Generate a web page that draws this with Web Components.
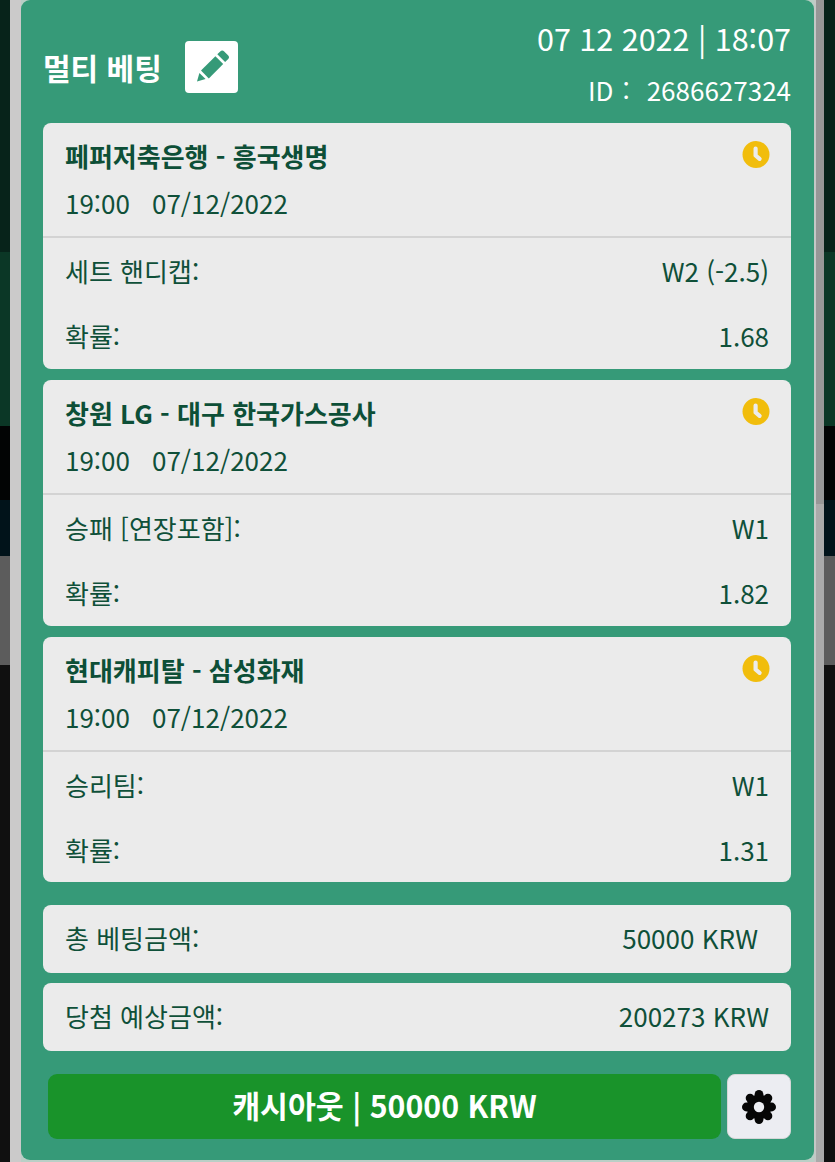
<!DOCTYPE html>
<html lang="ko">
<head>
<meta charset="utf-8">
<style>
html,body{margin:0;padding:0;background:#111;}
body{width:835px;height:1162px;overflow:hidden;font-family:"Noto Sans CJK KR","Noto Sans",sans-serif;}
</style>
</head>
<body>
<bet-screen>
  <bet-header slot="header" date="07 12 2022 | 18:07" ticket="2686627324">멀티 베팅</bet-header>
  <bet-card title-text="페퍼저축은행 - 흥국생명" market="세트 핸디캡:" pick="W2 (-2.5)" odds="1.68"></bet-card>
  <bet-card title-text="창원 LG - 대구 한국가스공사" market="승패 [연장포함]:" pick="W1" odds="1.82"></bet-card>
  <bet-card title-text="현대캐피탈 - 삼성화재" market="승리팀:" pick="W1" odds="1.31"></bet-card>
  <bet-sum slot="sum" label="총 베팅금액:" value="50000 KRW" inset></bet-sum>
  <bet-sum slot="sum" label="당첨 예상금액:" value="200273 KRW"></bet-sum>
  <bet-actions slot="actions">캐시아웃 | 50000 KRW</bet-actions>
</bet-screen>
<script>
function shadow(el, html){ el.attachShadow({mode:'open'}).innerHTML = html; }

customElements.define('bet-screen', class extends HTMLElement{
  constructor(){ super(); shadow(this, `
  <style>
    :host{display:flex;width:835px;height:1162px;}
    .strip{display:flex;flex-direction:column;flex:none;}
    .strip.l{width:10px}.strip.r{width:11px}
    .b1{height:252px;background:#07231a}
    .b2{height:174px;background:#0b3726}
    .b3{height:74px;background:#020404}
    .b4{height:56px;background:#01131a}
    .b5{height:109px;background:#5c5c5c}
    .b6{flex:1;background:#101010}
    .gl{width:11px;flex:none;background:#cbcaca}
    .gr{width:10px;flex:none;display:flex;flex-direction:column;border-left:2px solid #c4c8c6;box-sizing:border-box;}
    .gr i{display:block;height:504px;background:#979797}
    .gr b{display:block;flex:1;background:#aaaaaa}
    .mid{width:793px;flex:none;height:1162px;background:#b9cfc6;display:flex;flex-direction:column;}
    .panel{flex:none;height:1160px;box-sizing:border-box;background:#369a78;border-radius:9px;padding:0 23px 0 22px;display:flex;flex-direction:column;}
    .cards{display:flex;flex-direction:column;gap:11px;margin-top:0}
    .sums{display:flex;flex-direction:column;gap:10px;margin-top:23px}
    .acts{margin-top:23px}
  </style>
  <div class="strip l"><div class="b1"></div><div class="b2"></div><div class="b3"></div><div class="b4"></div><div class="b5"></div><div class="b6"></div></div>
  <div class="gl"></div>
  <div class="mid"><div class="panel">
    <slot name="header"></slot>
    <div class="cards"><slot></slot></div>
    <div class="sums"><slot name="sum"></slot></div>
    <div class="acts"><slot name="actions"></slot></div>
  </div></div>
  <div class="gr"><i></i><b></b></div>
  <div class="strip r"><div class="b1"></div><div class="b2"></div><div class="b3"></div><div class="b4"></div><div class="b5"></div><div class="b6"></div></div>`); }
});

customElements.define('bet-header', class extends HTMLElement{
  connectedCallback(){ if(this.shadowRoot) return; shadow(this, `
  <style>
    :host{display:flex;justify-content:space-between;height:123px;box-sizing:border-box;color:#fff;}
    .left{display:flex;align-items:center;gap:23px;height:52px;margin-top:41px}
    .t{font-size:30px;font-weight:700;line-height:52px;white-space:nowrap}
    .btn{width:53px;height:52px;background:#fff;border-radius:4px;display:flex;}
    .right{display:flex;flex-direction:column;align-items:flex-end;padding-top:16px}
    .d{font-size:30.5px;line-height:44px;white-space:nowrap}
    .id{font-size:26px;line-height:38px;margin-top:11px;display:flex;white-space:nowrap}
    .c{margin-left:9px;margin-right:17px}
  </style>
  <div class="left"><span class="t"><slot></slot></span>
    <span class="btn"><svg width="53" height="52" viewBox="0 0 53 52"><g fill="#369a78">
      <path d="M12 40.5l2.4-8.6 6.2 6.2z"/>
      <path d="M16 29.6l14.4-14.4 7.8 7.8-14.4 14.4z"/>
      <path d="M32.3 13.3l2.9-2.9a2.8 2.8 0 0 1 4 0l3.8 3.8a2.8 2.8 0 0 1 0 4l-2.9 2.9z"/>
    </g></svg></span></div>
  <div class="right"><span class="d">${this.getAttribute('date')}</span><span class="id"><span>ID</span><span class="c">:</span><span>${this.getAttribute('ticket')}</span></span></div>`); }
});

customElements.define('bet-clock', class extends HTMLElement{
  constructor(){ super(); shadow(this, `
  <style>:host{display:block;width:27px;height:27px;flex:none}svg{display:block;overflow:visible}</style>
  <svg width="27" height="27" viewBox="0 0 27 27"><circle cx="14" cy="13.5" r="13.5" fill="#f1bd0c"/>
  <path d="M13.6 7.5v7l4 3.4" fill="none" stroke="#ececec" stroke-width="4.2" stroke-linecap="round" stroke-linejoin="round"/></svg>`); }
});

customElements.define('bet-card', class extends HTMLElement{
  connectedCallback(){ if(this.shadowRoot) return; const a=n=>this.getAttribute(n); shadow(this, `
  <style>
    :host{display:block;background:#ebebeb;border-radius:8px;color:#0f5039;height:246px;font-size:26px;}
    :host(:last-of-type){height:245px}
    .head{height:115px;box-sizing:border-box;padding:13px 22px 0 22px;border-bottom:2px solid #d3d3d3;}
    .top{display:flex;justify-content:space-between;align-items:flex-start;height:40px}
    .name{font-weight:700;font-size:26px;line-height:40px;white-space:nowrap;color:#0d4f37}
    bet-clock{margin-top:5px}
    .time{line-height:40px;margin-top:7px;display:flex;gap:22px;font-size:26px;white-space:nowrap}
    .row{display:flex;justify-content:space-between;padding:0 22px;line-height:40px;white-space:nowrap}
    .r1{margin-top:13px}.r2{margin-top:25px}
  </style>
  <div class="head">
    <div class="top"><span class="name">${a('title-text')}</span><bet-clock></bet-clock></div>
    <div class="time"><span>19:00</span><span>07/12/2022</span></div>
  </div>
  <div class="row r1"><span>${a('market')}</span><span>${a('pick')}</span></div>
  <div class="row r2"><span>확률:</span><span>${a('odds')}</span></div>`); }
});

customElements.define('bet-sum', class extends HTMLElement{
  connectedCallback(){ if(this.shadowRoot) return; shadow(this, `
  <style>
    :host{display:flex;justify-content:space-between;align-items:center;height:68px;box-sizing:border-box;background:#ebebeb;border-radius:8px;color:#0f5039;font-size:26px;padding:0 22px 4px;white-space:nowrap}
    :host([inset]) .v{margin-right:11px}
  </style><span>${this.getAttribute('label')}</span><span class="v">${this.getAttribute('value')}</span>`); }
});

customElements.define('bet-actions', class extends HTMLElement{
  constructor(){ super(); 
    let lobes=''; for(let i=0;i<8;i++){const t=i*Math.PI/4; lobes+=`<circle cx="${(17+12.6*Math.cos(t)).toFixed(2)}" cy="${(17+12.6*Math.sin(t)).toFixed(2)}" r="4.4"/>`;}
    shadow(this, `
  <style>
    :host{display:flex;gap:6px;height:65px;padding-left:5px;}
    .cash{width:673px;flex:none;background:#19932a;border-radius:9px;color:#fff;font-size:30.3px;font-weight:700;display:flex;align-items:center;justify-content:center;white-space:nowrap;box-sizing:border-box;padding-bottom:3px}
    .gear{width:64px;flex:none;box-sizing:border-box;background:#ecedf2;border:1px solid #d5d7d8;border-radius:8px;display:flex;align-items:center;justify-content:center}
  </style>
  <div class="cash"><slot></slot></div>
  <div class="gear"><svg width="34" height="34" viewBox="0 0 34 34"><g fill="#060606"><circle cx="17" cy="17" r="12.5"/>${lobes}</g><circle cx="17" cy="17" r="5.2" fill="#ecedf2"/></svg></div>`); }
});
</script>
</body>
</html>
